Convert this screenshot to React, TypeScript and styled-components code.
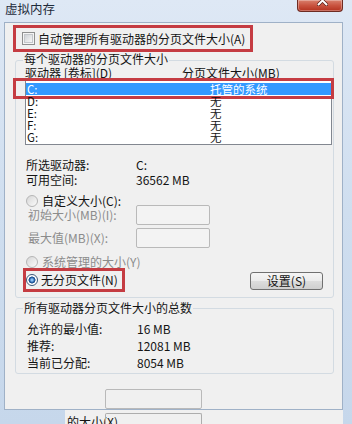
import React from 'react';
import styled, { createGlobalStyle } from 'styled-components';

const GlobalStyle = createGlobalStyle`
	html, body {
		margin: 0;
		padding: 0;
		background: #c9d9ec;
	}
	body {
		font-family: "Noto Sans CJK SC", "Liberation Sans", sans-serif;
		font-size: 12px;
		line-height: 12px;
		color: #141414;
	}
`;

const Frame = styled.div`
	width: 352px;
	height: 424px;
	overflow: hidden;
	display: flex;
	flex-direction: column;
	background: linear-gradient(180deg, #dee8f5 0%, #cfdeef 50%, #c6d7eb 100%);
`;

const TitleBar = styled.div`
	height: 22px;
	flex: none;
	display: flex;
	justify-content: space-between;
	align-items: flex-start;
`;

const Title = styled.div`
	margin: 2px 0 0 5px;
	font-size: 12.5px;
	line-height: 13px;
	color: #1e2b3b;
`;

const CloseButton = styled.div`
	width: 46px;
	height: 12px;
	margin-right: 9px;
	box-sizing: border-box;
	border: 1px solid #6e2b22;
	border-top: none;
	border-radius: 0 0 4px 4px;
	background: linear-gradient(180deg, #d9806d 0%, #c9533f 50%, #b3321f 100%);
	box-shadow: inset 0 0 0 1px rgba(255, 255, 255, 0.3);
	display: flex;
	justify-content: center;
	overflow: hidden;

	svg {
		margin-top: -5px;
		margin-left: 4px;
	}
`;

const Panel = styled.div`
	height: 388px;
	flex: none;
	margin: 0 9px 0 4px;
	box-sizing: border-box;
	border: 1px solid #9fb1c7;
	background: #f0f0f0;
	display: flex;
	flex-direction: column;
	align-items: flex-start;
`;

const Mark = styled.div<{ $w: number; $h: number }>`
	box-sizing: border-box;
	width: ${(p) => p.$w}px;
	height: ${(p) => p.$h}px;
	border: 3px solid #c53c42;
	display: flex;
	align-items: center;
	gap: 3px;
`;

const AutoMark = styled(Mark)`
	margin: 2px 0 0 8px;
	padding-left: 6px;
`;

const NoFileMark = styled(Mark)`
	margin-left: 7px;
	padding-left: 0;
`;

const Checkbox = styled.span`
	width: 13px;
	height: 13px;
	flex: none;
	box-sizing: border-box;
	border: 1px solid #8e8f8f;
	background: #f4f4f4;
	display: flex;
	align-items: center;
	justify-content: center;

	&::after {
		content: '';
		width: 9px;
		height: 9px;
		box-sizing: border-box;
		border: 1px solid #c4c7cb;
		background: linear-gradient(135deg, #cfd2d6, #f6f6f6);
	}
`;

const Radio = styled.span<{ $checked?: boolean; $disabled?: boolean }>`
	width: 12px;
	height: 12px;
	flex: none;
	box-sizing: border-box;
	border-radius: 50%;
	border: 1px solid ${(p) => (p.$disabled ? '#b5b5b5' : '#3b5878')};
	background: ${(p) =>
		p.$checked
			? 'radial-gradient(circle, #8cc0f2 0 1px, #2d68ad 2.2px, #1c4a85 3.2px, #ffffff 3.8px)'
			: 'linear-gradient(135deg, #d6d6d6, #fbfbfb)'};
`;

const Label = styled.span<{ $disabled?: boolean }>`
	white-space: nowrap;
	color: ${(p) => (p.$disabled ? '#8c8c8c' : '#141414')};
`;

const Group = styled.div<{ $top: number; $bottom: number }>`
	box-sizing: border-box;
	width: 319px;
	margin: ${(p) => p.$top}px 0 0 10px;
	padding-bottom: ${(p) => p.$bottom}px;
	border: 1px solid #d3dbe2;
	border-radius: 3px;
	display: flex;
	flex-direction: column;
	align-items: flex-start;
`;

const GroupTitle = styled.div<{ $lift: number }>`
	margin: -${(p) => p.$lift}px 0 0 7px;
	padding: 0 1px;
	background: #f0f0f0;
	white-space: nowrap;
`;

const HeaderRow = styled.div`
	display: grid;
	grid-template-columns: 157px auto;
	margin: 2px 0 0 9px;
	white-space: nowrap;
`;

const ListBox = styled.div`
	box-sizing: border-box;
	width: 307px;
	height: 66px;
	margin-left: 9px;
	padding-top: 3px;
	border: 1px solid #828790;
	background: #ffffff;
`;

const DriveRow = styled.div<{ $selected?: boolean }>`
	position: relative;
	height: 12px;
	display: grid;
	grid-template-columns: 183px auto;
	padding-left: 1px;
	background: ${(p) => (p.$selected ? '#3399ff' : 'transparent')};
	color: ${(p) => (p.$selected ? '#ffffff' : '#141414')};
	font-size: 11.5px;
	white-space: nowrap;
`;

const RowMark = styled.span`
	position: absolute;
	left: -13px;
	right: -3px;
	top: -5px;
	bottom: -4px;
	border: 3px solid #c53c42;
	pointer-events: none;
`;

const InfoGrid = styled.div<{ $top: number; $left: number; $gap: number }>`
	display: grid;
	grid-template-columns: 110px auto;
	row-gap: ${(p) => p.$gap}px;
	margin: ${(p) => p.$top}px 0 0 ${(p) => p.$left}px;
	white-space: nowrap;
`;

const RadioRow = styled.div<{ $top: number }>`
	display: flex;
	align-items: center;
	gap: 4px;
	height: 12px;
	margin: ${(p) => p.$top}px 0 0 10px;
`;

const FieldGrid = styled.div`
	display: grid;
	grid-template-columns: 108px 74px;
	row-gap: 3px;
	align-items: center;
	margin: -2px 0 0 12px;
`;

const TextBox = styled.div<{ $w: number }>`
	box-sizing: border-box;
	width: ${(p) => p.$w}px;
	height: 20px;
	border: 1px solid #b9b9b9;
	border-radius: 2px;
	background: #f3f3f3;
`;

const ActionRow = styled.div`
	box-sizing: border-box;
	width: 100%;
	height: 24px;
	padding-right: 10px;
	display: flex;
	align-items: center;
	justify-content: space-between;
`;

const Button = styled.button`
	box-sizing: border-box;
	width: 73px;
	height: 18px;
	margin-top: 1px;
	padding: 0;
	border: 1px solid #707070;
	border-radius: 3px;
	background: linear-gradient(180deg, #f5f5f5 0%, #ebebeb 50%, #dddddd 51%, #cfcfcf 100%);
	font: inherit;
	color: #141414;
`;

const BottomBox = styled(TextBox)`
	margin: 15px 0 0 100px;
	background: #f0f0f0;
`;

const BottomStrip = styled.div`
	flex: 1;
	display: flex;
	box-sizing: border-box;
	border-bottom: 2px solid #161616;
`;

const FrameCorner = styled.div`
	width: 65px;
	flex: none;
	box-sizing: border-box;
	border-bottom: 2px solid #44546a;
`;

const FrameEdge = styled.div`
	width: 9px;
	flex: none;
`;

const Behind = styled.div`
	flex: 1;
	background: #f0f0f0;
	display: grid;
	overflow: hidden;

	& > * {
		grid-area: 1 / 1;
	}
`;

const BehindText = styled.span`
	margin: 6px 0 0 2px;
	white-space: nowrap;
`;

const BehindBox = styled.div`
	box-sizing: border-box;
	width: 97px;
	height: 14px;
	margin: 3px 0 0 40px;
	border: 1px solid #adadad;
	border-bottom: none;
	border-radius: 2px 2px 0 0;
`;

const drives = [
	{ name: 'C:', size: '托管的系统', selected: true },
	{ name: 'D:', size: '无' },
	{ name: 'E:', size: '无' },
	{ name: 'F:', size: '无' },
	{ name: 'G:', size: '无' },
];

const App: React.FC = () => {
	return (
		<>
			<GlobalStyle />
			<Frame>
				<TitleBar>
					<Title>虚拟内存</Title>
					<CloseButton>
						<svg width='11' height='11' viewBox='0 0 11 11'>
							<path d='M1.5 1.5 L9.5 9.5 M9.5 1.5 L1.5 9.5' stroke='#5a1d14' strokeWidth='3.4' strokeLinecap='round' />
							<path d='M1.5 1.5 L9.5 9.5 M9.5 1.5 L1.5 9.5' stroke='#ffffff' strokeWidth='2' strokeLinecap='round' />
						</svg>
					</CloseButton>
				</TitleBar>

				<Panel>
					<AutoMark $w={240} $h={27}>
						<Checkbox />
						<Label>自动管理所有驱动器的分页文件大小(A)</Label>
					</AutoMark>

					<Group $top={8} $bottom={5}>
						<GroupTitle $lift={8}>每个驱动器的分页文件大小</GroupTitle>
						<HeaderRow>
							<span>驱动器 [卷标](D)</span>
							<span>分页文件大小(MB)</span>
						</HeaderRow>
						<ListBox>
							{drives.map((d) => (
								<DriveRow key={d.name} $selected={d.selected}>
									<span>{d.name}</span>
									<span>{d.size}</span>
									{d.selected && <RowMark />}
								</DriveRow>
							))}
						</ListBox>

						<InfoGrid $top={14} $left={10} $gap={3}>
							<span>所选驱动器:</span>
							<span>C:</span>
							<span>可用空间:</span>
							<span>36562 MB</span>
						</InfoGrid>

						<RadioRow $top={9}>
							<Radio $disabled />
							<Label>自定义大小(C):</Label>
						</RadioRow>
						<FieldGrid>
							<Label $disabled>初始大小(MB)(I):</Label>
							<TextBox $w={74} />
							<Label $disabled>最大值(MB)(X):</Label>
							<TextBox $w={74} />
						</FieldGrid>

						<RadioRow $top={8}>
							<Radio $disabled />
							<Label $disabled>系统管理的大小(Y)</Label>
						</RadioRow>
						<ActionRow>
							<NoFileMark $w={102} $h={24}>
								<Radio $checked />
								<Label>无分页文件(N)</Label>
							</NoFileMark>
							<Button>设置(S)</Button>
						</ActionRow>
					</Group>

					<Group $top={10} $bottom={4}>
						<GroupTitle $lift={7}>所有驱动器分页文件大小的总数</GroupTitle>
						<InfoGrid $top={9} $left={11} $gap={5}>
							<span>允许的最小值:</span>
							<span>16 MB</span>
							<span>推荐:</span>
							<span>12081 MB</span>
							<span>当前已分配:</span>
							<span>8054 MB</span>
						</InfoGrid>
					</Group>

					<BottomBox $w={97} />
				</Panel>

				<BottomStrip>
					<FrameCorner />
					<Behind>
						<BehindText>的大小(X)</BehindText>
						<BehindBox />
					</Behind>
					<FrameEdge />
				</BottomStrip>
			</Frame>
		</>
	);
};

export default App;
